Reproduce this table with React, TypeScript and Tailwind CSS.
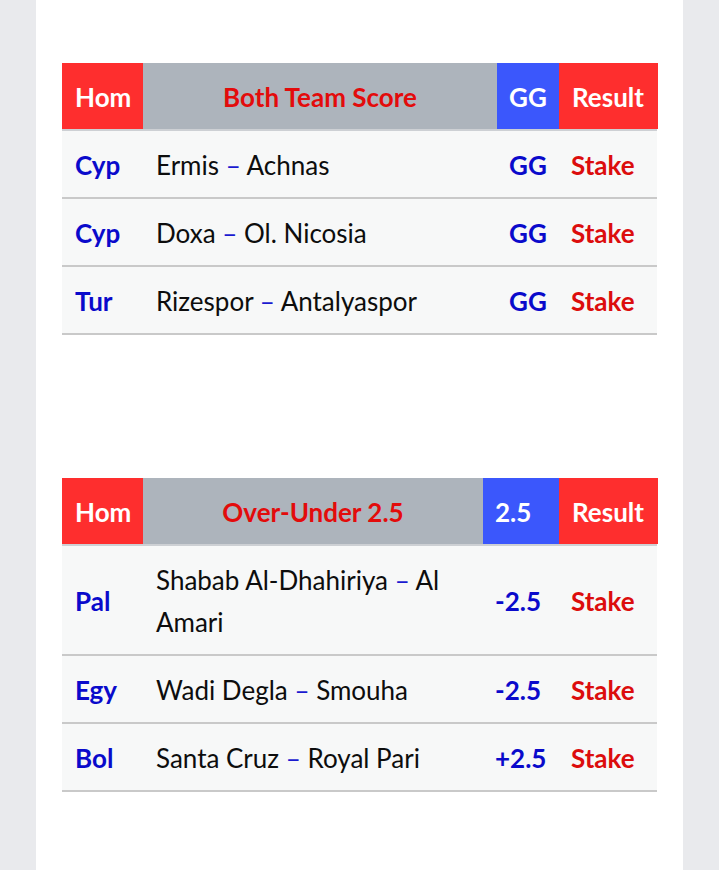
type Row = { country: string; home: string; away: string; tip: string };

const bttsRows: Row[] = [
  { country: "Cyp", home: "Ermis", away: "Achnas", tip: "GG" },
  { country: "Cyp", home: "Doxa", away: "Ol. Nicosia", tip: "GG" },
  { country: "Tur", home: "Rizespor", away: "Antalyaspor", tip: "GG" },
];

const ouRows: Row[] = [
  { country: "Pal", home: "Shabab Al-Dhahiriya", away: "Al Amari", tip: "-2.5" },
  { country: "Egy", home: "Wadi Degla", away: "Smouha", tip: "-2.5" },
  { country: "Bol", home: "Santa Cruz", away: "Royal Pari", tip: "+2.5" },
];

function TipTable({
  title,
  tipLabel,
  rows,
  cols,
}: {
  title: string;
  tipLabel: string;
  rows: Row[];
  cols: string;
}) {
  return (
    <div className="w-full text-[26px] leading-[42px]">
      <div className={`grid ${cols} border-b-2 border-[#cdd0d4] font-bold text-white`}>
        <div className="bg-[#fe2e2e] px-[13px] pt-[13px] pb-[11px]">Hom</div>
        <div className="bg-[#adb4bc] px-[13px] pt-[13px] pb-[11px] text-center text-[#e30b0b]">
          {title}
        </div>
        <div className="bg-[#3b57fc] px-[12px] pt-[13px] pb-[11px]">{tipLabel}</div>
        <div className="bg-[#fe2e2e] px-[13px] pt-[13px] pb-[11px]">Result</div>
      </div>
      {rows.map((r) => (
        <div
          key={r.home}
          className={`grid ${cols} items-center border-b-2 border-[#c9c9c9] bg-[#f7f8f8]`}
        >
          <div className="px-[13px] pt-[13px] pb-[11px] font-bold text-[#0a0acb]">{r.country}</div>
          <div className="px-[13px] pt-[13px] pb-[11px] text-[#0d0d0d]">
            {r.home} <span className="text-[#1a1ad0]">–</span> {r.away}
          </div>
          <div className="px-[12px] pt-[13px] pb-[11px] font-bold text-[#0a0acb]">{r.tip}</div>
          <div className="px-[12px] pt-[13px] pb-[11px] font-bold text-[#dc0d0d]">Stake</div>
        </div>
      ))}
    </div>
  );
}

export default function App() {
  return (
    <div
      className="min-h-[870px] bg-[#e9eaed] px-[36px]"
      style={{ fontFamily: "Lato, 'Noto Sans', sans-serif" }}
    >
      <div className="min-h-[870px] bg-white px-[26px] pt-[63px] pb-[80px]">
        <TipTable
          title="Both Team Score"
          tipLabel="GG"
          rows={bttsRows}
          cols="grid-cols-[81px_354px_62px_99px]"
        />
        <div className="h-[143px]" />
        <TipTable
          title="Over-Under 2.5"
          tipLabel="2.5"
          rows={ouRows}
          cols="grid-cols-[81px_340px_76px_99px]"
        />
      </div>
    </div>
  );
}
